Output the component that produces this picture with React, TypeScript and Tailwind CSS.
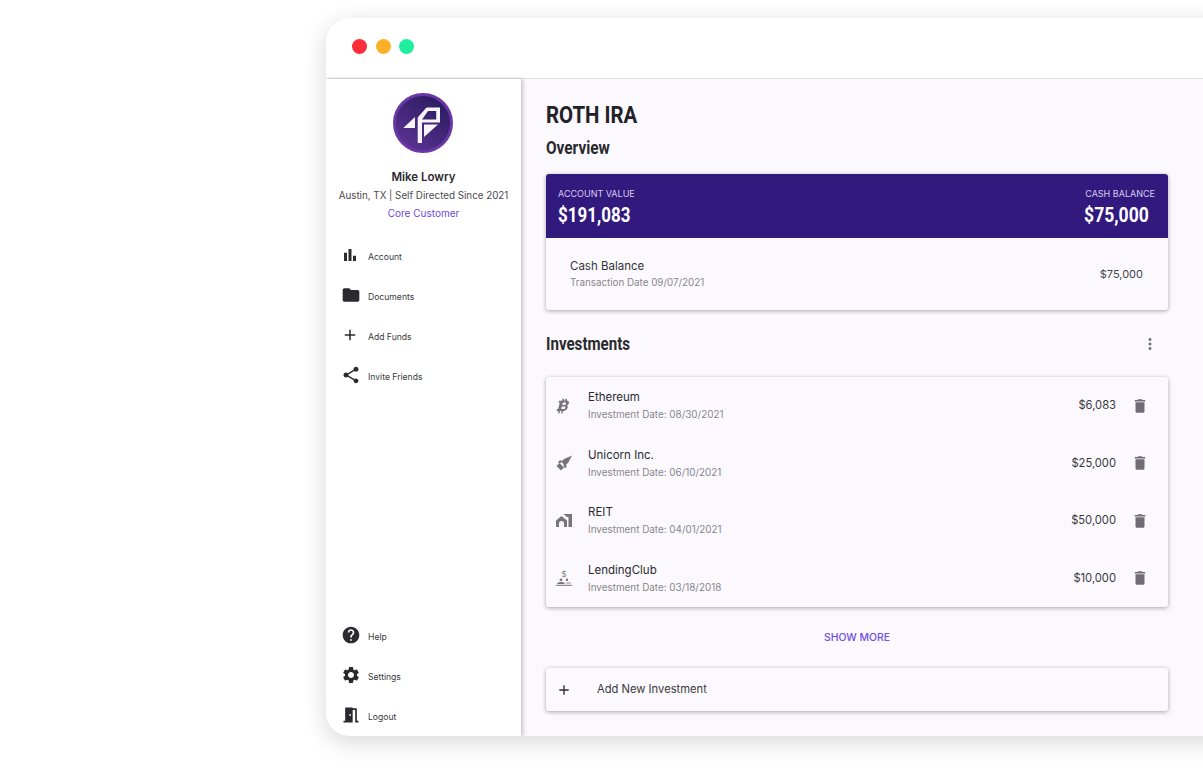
import React from 'react';
import {
  MdAdd,
  MdBarChart,
  MdDelete,
  MdFolder,
  MdHelp,
  MdMeetingRoom,
  MdMoreVert,
  MdSettings,
  MdShare,
} from 'react-icons/md';

const BtcIcon = () => (
  <svg viewBox="0 0 16 20" className="w-[13px] h-[16px] ml-[1px] -skew-x-12" fill="#77757c">
    <path fillRule="evenodd" d="M5 1h2v2h1.600V1h2v2.100c2.400.4 3.700 1.700 3.400 3.800-.2 1.300-.9 2.200-2 2.600 1.400.5 2 1.600 1.700 3.100-.4 2.500-2.300 3.500-4.800 3.500V19h-2v-2.900H5V19H3v-2.900H.5l.3-2.200h1.500V5.700H.8L1 3.500h3.700zM6.200 5.600v3h2.600c1 0 1.600-.4 1.700-1.500.1-1-.5-1.500-1.500-1.500zM6 10.500v3.400h2.800c1.200 0 1.900-.5 2-1.700.2-1.200-.6-1.700-1.700-1.700z" />
  </svg>
);

const RocketIcon = () => (
  <svg viewBox="0 0 16 16" className="w-[16px] h-[16px]" fill="#77757c">
    <path d="M16 .500 8 4 5.500 7 9 10.500l3-2.500z" />
    <path d="M3.500 5.500h3.500L4 8.500 2 7.500z" />
    <path d="M8 12.500 7.500 9 10.500 10l-.5 3z" />
    <path d="M3.500 8 8 12.500 5 15.500.5 11z" />
  </svg>
);

const HouseIcon = () => (
  <svg viewBox="0 0 16 13" className="w-[16px] h-[13px]" fill="#77757c">
    <path d="M0 13V6.500L5.500 2 11 6.500V13H8V9.500a2.500 2.500 0 0 0-5 0V13z" />
    <path d="M7.500 0H16v13h-3.500V3H10.800z" />
  </svg>
);

const LendingIcon = () => (
  <svg viewBox="0 0 16 18" className="w-[16px] h-[18px]">
    <text x="8" y="8" textAnchor="middle" fontSize="8" fontFamily="Inter, sans-serif" fill="#77757c">$</text>
    <circle cx="5" cy="10.800" r="1.400" fill="#77757c" />
    <circle cx="11" cy="10.800" r="1.200" fill="#77757c" />
    <path d="M1 15c.5-1.500 2-2 4-2s3.500.5 4 2z" fill="#77757c" />
    <path d="M0 16.300h16" stroke="#77757c" strokeWidth="1" />
    <path d="M10 14h5" stroke="#77757c" strokeWidth=".8" />
  </svg>
);

const Avatar = () => (
  <svg viewBox="0 0 60 60" className="w-[60px] h-[60px] block -ml-[1px]">
    <defs>
      <linearGradient id="avatarBg" x1="0.8" y1="0.1" x2="0.2" y2="0.9">
        <stop offset="0" stopColor="#2c1c63" />
        <stop offset="1" stopColor="#5a3290" />
      </linearGradient>
    </defs>
    <circle cx="30" cy="30" r="28.500" fill="url(#avatarBg)" stroke="#6a36a6" strokeWidth="3" />
    <path d="M10.300 35 22 24v11z" fill="#f7f4fb" />
    <path
      fillRule="evenodd"
      d="M24.700 50V24.500L33.500 14.500H47V29.500H29V50zM29 26.500H43.200V18H35z"
      fill="#f7f4fb"
    />
    <path d="M31 31.500H45L31 44z" fill="#f7f4fb" />
  </svg>
);

const navTop = [
  { label: 'Account', icon: MdBarChart, size: 'text-[18px]' },
  { label: 'Documents', icon: MdFolder, size: 'text-[20px]' },
  { label: 'Add Funds', icon: MdAdd, size: 'text-[18px]' },
  { label: 'Invite Friends', icon: MdShare, size: 'text-[20px]' },
];

const navBottom = [
  { label: 'Help', icon: MdHelp, size: 'text-[20px]' },
  { label: 'Settings', icon: MdSettings, size: 'text-[20px]' },
  { label: 'Logout', icon: MdMeetingRoom, size: 'text-[20px]' },
];

const investments = [
  { name: 'Ethereum', date: '08/30/2021', amount: '$6,083', icon: <BtcIcon /> },
  { name: 'Unicorn Inc.', date: '06/10/2021', amount: '$25,000', icon: <RocketIcon /> },
  { name: 'REIT', date: '04/01/2021', amount: '$50,000', icon: <HouseIcon /> },
  { name: 'LendingClub', date: '03/18/2018', amount: '$10,000', icon: <LendingIcon /> },
];

const NavItem = ({ label, icon: Icon, size }: { label: string; icon: React.ComponentType<{ className?: string }>; size: string }) => (
  <div className="h-[40px] flex items-center pl-[15px]">
    <span className="w-[27px] -mt-[4px] flex items-center">
      <Icon className={`${size} text-[#2b2b2f]`} />
    </span>
    <span className="text-[8.600px] text-[#3a3a3e]">{label}</span>
  </div>
);

const App: React.FC = () => {
  return (
    <div className="w-[1203px] h-[768px] bg-white overflow-hidden pl-[326px] pt-[18px] font-['Inter',sans-serif]">
      <div className="w-[900px] h-[718px] bg-white rounded-l-[24px] shadow-[0_6px_24px_rgba(0,0,0,0.16)] overflow-hidden flex flex-col">
        {/* Window bar */}
        <div className="h-[61px] shrink-0 border-b border-[#e3e3e6] flex items-center gap-[8.500px] pl-[26px] pb-[3px]">
          <span className="w-[15px] h-[15px] rounded-full bg-[#ff2d3a]" />
          <span className="w-[15px] h-[15px] rounded-full bg-[#ffb027]" />
          <span className="w-[15px] h-[15px] rounded-full bg-[#1ff0a0]" />
        </div>

        <div className="flex-1 flex min-h-0">
          {/* Sidebar */}
          <aside className="w-[195px] shrink-0 bg-white shadow-[2px_0_4px_rgba(0,0,0,0.22)] z-10 flex flex-col">
            <div className="flex flex-col items-center pt-[14px]">
              <Avatar />
              <div className="mt-[17px] text-[11.500px] leading-[14px] font-semibold text-[#2b2b2f]">Mike Lowry</div>
              <div className="mt-[5px] text-[9.800px] leading-[14px] text-[#4a4a4f] whitespace-nowrap">Austin, TX | Self Directed Since 2021</div>
              <div className="mt-[3px] text-[10px] leading-[14px] text-[#6c4ae0]">Core Customer</div>
            </div>
            <nav className="mt-[17px]">
              {navTop.map((n) => (
                <NavItem key={n.label} {...n} />
              ))}
            </nav>
            <nav className="mt-auto -mb-[1px]">
              {navBottom.map((n) => (
                <NavItem key={n.label} {...n} />
              ))}
            </nav>
          </aside>

          {/* Main */}
          <main className="flex-1 bg-[#fbf9fe] pl-[25px] pr-[58px] pt-[21px]">
            <h1 className="origin-left scale-x-[0.85] font-['Roboto',sans-serif] text-[24px] leading-[30px] font-bold text-[#222226]">ROTH IRA</h1>
            <h2 className="mt-[6px] origin-left scale-x-[0.855] font-['Roboto',sans-serif] text-[18px] leading-[24px] font-bold text-[#2a2a2e]">Overview</h2>

            <section className="mt-[14px] rounded-[3px] bg-[#fbf9fe] shadow-[0_1px_4px_rgba(0,0,0,0.35)] overflow-hidden">
              <div className="h-[64px] bg-[#32197d] flex justify-between pl-[12px] pr-[13px] pt-[14px] text-white">
                <div>
                  <div className="text-[9px] leading-[12px] text-[#d9cdf2]">ACCOUNT VALUE</div>
                  <div className="mt-[3px] origin-left scale-x-[0.85] font-['Roboto',sans-serif] text-[20px] leading-[24px] font-bold">$191,083</div>
                </div>
                <div className="flex flex-col items-end">
                  <div className="text-[9px] leading-[12px] text-[#d9cdf2]">CASH BALANCE</div>
                  <div className="mt-[3px] mr-[6px] origin-right scale-x-[0.877] font-['Roboto',sans-serif] text-[20px] leading-[24px] font-bold">$75,000</div>
                </div>
              </div>
              <div className="h-[72px] flex items-center justify-between pl-[24px] pr-[25px]">
                <div>
                  <div className="text-[11.500px] leading-[16px] text-[#333337]">Cash Balance</div>
                  <div className="mt-[2px] pb-[1px] text-[9.800px] leading-[14px] text-[#88868c]">Transaction Date 09/07/2021</div>
                </div>
                <div className="text-[11px] text-[#444448]">$75,000</div>
              </div>
            </section>

            <div className="mt-[21px] h-[24px] flex items-center justify-between">
              <h2 className="origin-left scale-x-[0.84] font-['Roboto',sans-serif] text-[18px] font-bold text-[#2a2a2e]">Investments</h2>
              <MdMoreVert className="mt-[2px] text-[18px] text-[#77757c] mr-[9px]" />
            </div>

            <section className="mt-[22px] rounded-[3px] bg-[#fbf9fe] shadow-[0_1px_4px_rgba(0,0,0,0.35)]">
              {investments.map((row) => (
                <div key={row.name} className="h-[57.500px] flex items-center pl-[10px] pr-[19px]">
                  <span className="w-[32px] flex items-center">{row.icon}</span>
                  <div className="flex-1">
                    <div className="text-[11.500px] leading-[16px] text-[#2b2b2f]">{row.name}</div>
                    <div className="mt-[2px] pb-[1px] text-[9.900px] leading-[14px] text-[#88868c]">Investment Date: {row.date}</div>
                  </div>
                  <div className="text-[11.200px] text-[#38383c] mr-[15px]">{row.amount}</div>
                  <MdDelete className="text-[18px] text-[#6f6d73]" />
                </div>
              ))}
            </section>

            <div className="mt-[24px] text-center text-[10.400px] leading-[14px] font-medium text-[#6f4ee8]">SHOW MORE</div>

            <section className="mt-[23px] h-[43px] rounded-[3px] bg-[#fbf9fe] shadow-[0_1px_4px_rgba(0,0,0,0.35)] flex items-center pl-[10px]">
              <MdAdd className="text-[16px] text-[#2b2b2f]" />
              <span className="ml-[25px] text-[11.200px] text-[#3a3a3e]">Add New Investment</span>
            </section>
          </main>
        </div>
      </div>
    </div>
  );
};

export default App;
